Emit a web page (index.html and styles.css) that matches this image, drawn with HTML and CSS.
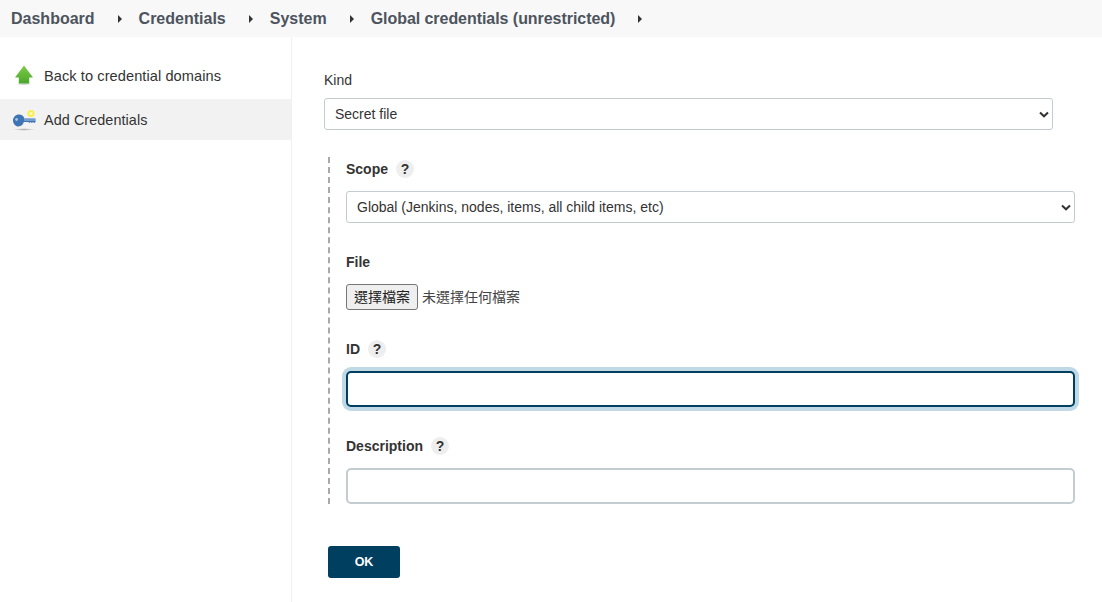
FILE: index.html
```html
<!DOCTYPE html>
<html lang="en">
<head>
<meta charset="utf-8">
<title>Add Credentials</title>
<link rel="stylesheet" href="styles.css">
</head>
<body>
<nav class="breadcrumbs">
  <a class="crumb">Dashboard</a><span class="caret"></span>
  <a class="crumb">Credentials</a><span class="caret"></span>
  <a class="crumb">System</a><span class="caret"></span>
  <a class="crumb crumb-last">Global credentials (unrestricted)</a><span class="caret"></span>
</nav>
<div class="page">
  <aside class="sidebar">
    <a class="task task-back">
      <svg class="task-icon" viewBox="0 0 24 24" width="24" height="24" aria-hidden="true">
        <defs>
          <linearGradient id="up" x1="0" y1="0" x2="0" y2="1"><stop offset="0" stop-color="#7fca4a"/><stop offset="1" stop-color="#4aa82a"/></linearGradient>
          <radialGradient id="sh"><stop offset="0" stop-color="#999" stop-opacity=".6"/><stop offset="1" stop-color="#999" stop-opacity="0"/></radialGradient>
        </defs>
        <ellipse cx="12" cy="20" rx="8" ry="1.500" fill="url(#sh)"/>
        <path d="M12 1.500 21 13.500H17.200V19.500H6.800V13.500H3Z" fill="url(#up)"/>
      </svg>
      <span>Back to credential domains</span>
    </a>
    <a class="task task-active">
      <svg class="task-icon" viewBox="0 0 24 24" width="24" height="24" aria-hidden="true">
        <defs>
          <radialGradient id="sh2"><stop offset="0" stop-color="#999" stop-opacity=".8"/><stop offset="1" stop-color="#999" stop-opacity="0"/></radialGradient>
        </defs>
        <ellipse cx="12" cy="21.500" rx="11" ry="1.300" fill="url(#sh2)"/>
        <circle cx="19" cy="5.500" r="3.600" fill="#f7ef4e"/>
        <circle cx="19" cy="5.500" r="1.500" fill="#fdf9c4"/>
        <path d="M7 6.500c2.700 0 4.700 1.600 5.300 4H23.500v3.600l-1.200 1-1.200-1-1.200 1-1.200-1-1.200 1-1.200-1h-4.500c-.6 2.500-2.700 4.400-5.500 4.400C3.600 18.500 1 15.800 1 12.500S3.600 6.500 7 6.500Z" fill="#3f74b5"/>
        <circle cx="4.600" cy="11.500" r="1.400" fill="#a9c6e6"/>
        <path d="M12 12h11.500" stroke="#b5cfea" stroke-width=".9"/>
      </svg>
      <span>Add Credentials</span>
    </a>
  </aside>
  <main class="content">
    <form class="form">
      <div class="field kind">
        <label class="label label-plain">Kind</label>
        <select class="control select kind-select"><option>Secret file</option></select>
      </div>
      <div class="group">
        <div class="field">
          <div class="label-row"><label class="label">Scope</label><span class="help">?</span></div>
          <select class="control select"><option>Global (Jenkins, nodes, items, all child items, etc)</option></select>
        </div>
        <div class="field file-field">
          <div class="label-row"><label class="label">File</label></div>
          <div class="file-row"><span class="file-button">選擇檔案</span><span class="file-name">未選擇任何檔案</span></div>
        </div>
        <div class="field id-field">
          <div class="label-row"><label class="label">ID</label><span class="help">?</span></div>
          <div class="text-input focused"></div>
        </div>
        <div class="field desc-field">
          <div class="label-row"><label class="label">Description</label><span class="help">?</span></div>
          <div class="text-input"></div>
        </div>
      </div>
      <span class="ok">OK</span>
    </form>
  </main>
</div>
</body>
</html>
```
FILE: styles.css
```css
* { box-sizing: border-box; }
html, body { margin: 0; height: 100%; overflow: hidden; }
body {
  font-family: "Liberation Sans", "Noto Sans CJK TC", sans-serif;
  font-size: 14px;
  color: #333;
  background: #fff;
}
.breadcrumbs {
  height: 37px;
  background: #f8f8f8;
  display: flex;
  align-items: center;
  padding-left: 11px;
}
.crumb {
  font-size: 16px;
  font-weight: 700;
  color: #4d545d;
}
.crumb-last { letter-spacing: -.05px; }
.caret {
  width: 0;
  height: 0;
  border-left: 4px solid #333;
  border-top: 4px solid transparent;
  border-bottom: 4px solid transparent;
  margin: 0 17px 0 23px;
}
.page { display: flex; height: 565px; }
.sidebar {
  width: 292px;
  flex: none;
  border-right: 1px solid #f0f0f0;
  padding-top: 19px;
}
.task {
  display: flex;
  align-items: center;
  gap: 8px;
  height: 41px;
  padding-left: 12px;
  margin-bottom: 2px;
  font-size: 14.600px;
  letter-spacing: .07px;
  color: #333;
}
.task-back { padding-bottom: 2px; }
.task-active {
  background: #f2f2f2;
  font-size: 14.400px;
  padding-top: 1px;
}
.content { flex: 1; padding: 35px 27px 0 32px; }
.form { display: flex; flex-direction: column; align-items: flex-start; }
.field { display: flex; flex-direction: column; width: 100%; }
.kind { width: 729px; }
.label { font-size: 14px; font-weight: 700; color: #333; line-height: 16px; }
.label-plain { font-weight: 400; margin-bottom: 10px; }
.label-row { display: flex; align-items: center; gap: 8px; height: 18px; margin-bottom: 13px; }
.help {
  width: 18px;
  height: 18px;
  border-radius: 50%;
  background: #eee;
  font-size: 14px;
  font-weight: 700;
  color: #333;
  display: flex;
  align-items: center;
  justify-content: center;
}
.control {
  width: 100%;
  height: 32px;
  border: 1px solid #c3ccd1;
  border-radius: 3px;
  background-color: #fff;
  font: inherit;
  color: #333;
  padding: 0 10px;
  appearance: none;
  -webkit-appearance: none;
  background-image: url("data:image/svg+xml,%3Csvg xmlns='http://www.w3.org/2000/svg' width='10' height='7'%3E%3Cpath d='M1 1.500 5 5.300 9 1.500' fill='none' stroke='%23333' stroke-width='2'/%3E%3C/svg%3E");
  background-repeat: no-repeat;
  background-position: right 3px center;
}
.group {
  width: 747px;
  margin: 27px 0 0 4px;
  padding: 3px 0 0 16px;
  border-left: 2px dashed #a9a9a9;
}
.file-field { margin-top: 30px; }
.file-row { display: flex; align-items: center; gap: 4px; }
.file-button {
  width: 72px;
  height: 26px;
  padding-bottom: 2px;
  border: 1px solid #767676;
  border-radius: 3px;
  background: #efefef;
  color: #222;
  font-size: 14px;
  display: flex;
  align-items: center;
  justify-content: center;
}
.file-name { font-size: 14px; color: #444; padding-bottom: 2px; }
.id-field { margin-top: 30px; }
.desc-field { margin-top: 30px; }
.text-input {
  height: 36px;
  width: 100%;
  background: #fff;
  border: 2px solid #c3ccd1;
  border-radius: 5px;
}
.focused {
  border-color: #003f5f;
  box-shadow: 0 0 0 4px #bfd9e6;
}
.ok {
  margin: 42px 0 0 4px;
  width: 72px;
  height: 32px;
  border-radius: 3px;
  background: #003f5f;
  color: #fff;
  font-size: 12.500px;
  font-weight: 700;
  display: flex;
  align-items: center;
  justify-content: center;
}
```
